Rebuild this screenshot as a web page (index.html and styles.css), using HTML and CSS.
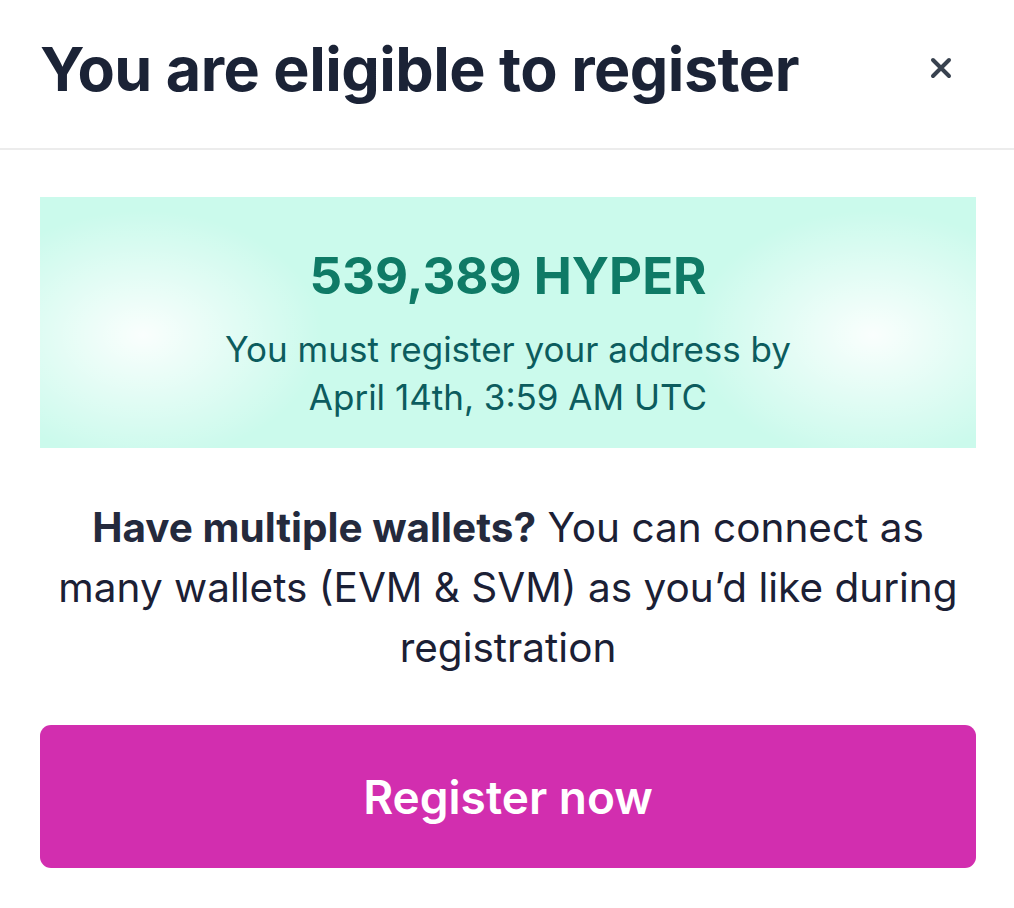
FILE: index.html
```html
<!DOCTYPE html>
<html lang="en">
<head>
<meta charset="utf-8">
<title>Register</title>
<link rel="stylesheet" href="styles.css">
</head>
<body>
<div class="modal">
  <header class="header">
    <h1 class="title">You are eligible to register</h1>
    <button class="close" aria-label="Close">
      <svg width="22" height="22" viewBox="0 0 22 22" fill="none" stroke="#38424f" stroke-width="4" stroke-linecap="round"><path d="M3 3L19 19M19 3L3 19"/></svg>
    </button>
  </header>
  <main class="content">
    <section class="reward">
      <div class="amount">539,389 HYPER</div>
      <p class="deadline">You must register your address by<br>April 14th, 3:59 AM UTC</p>
    </section>
    <p class="note"><strong>Have multiple wallets?</strong> You can connect as many wallets (EVM &amp; SVM) as you’d like during registration</p>
    <button class="register">Register now</button>
  </main>
</div>
</body>
</html>
```
FILE: styles.css
```css
* { box-sizing: border-box; }
html, body { margin: 0; padding: 0; background: #ffffff; }
body { font-family: Inter, "Noto Sans", "Liberation Sans", sans-serif; color: #1b2035; }
.modal { width: 1014px; height: 908px; display: flex; flex-direction: column; }
.header {
  height: 150px;
  padding: 39px 62px 0 40px;
  display: flex;
  align-items: flex-start;
  justify-content: space-between;
  border-bottom: 2px solid #ececec;
}
.title {
  margin: 0;
  font-size: 61px;
  font-weight: 700;
  color: #1b2336;
  letter-spacing: -0.5px;
  line-height: 1;
}
.close {
  border: 0; background: none; padding: 0; width: 22px; height: 22px;
  display: flex; align-items: center; justify-content: center;
  margin-top: 18px;
}
.content { padding: 47px 38px 0 40px; display: flex; flex-direction: column; }
.reward {
  height: 251px;
  padding-top: 53px;
  background:
    radial-gradient(ellipse 180px 125px at 11% 55%, rgba(255,255,255,0.9), rgba(255,255,255,0) 100%),
    radial-gradient(ellipse 180px 125px at 89% 55%, rgba(255,255,255,0.9), rgba(255,255,255,0) 100%),
    #cbfaec;
  display: flex; flex-direction: column; align-items: center;
  text-align: center;
}
.amount {
  font-size: 51px; font-weight: 700; color: #0f7a66; line-height: 1;
}
.deadline {
  margin: 24px 0 0;
  font-size: 35px; line-height: 48px; color: #0c5c5e; font-weight: 400;
}
.note {
  margin: 50px 0 0;
  text-align: center;
  font-size: 40.5px; line-height: 60px; color: #1b2035;
}
.note strong { font-weight: 700; color: #242a3d; }
.register {
  margin-top: 47px;
  height: 143px;
  border: 0; border-radius: 11px;
  background: #d22eaf;
  color: #ffffff;
  font-family: inherit;
  font-size: 46px; font-weight: 600;
}
```
